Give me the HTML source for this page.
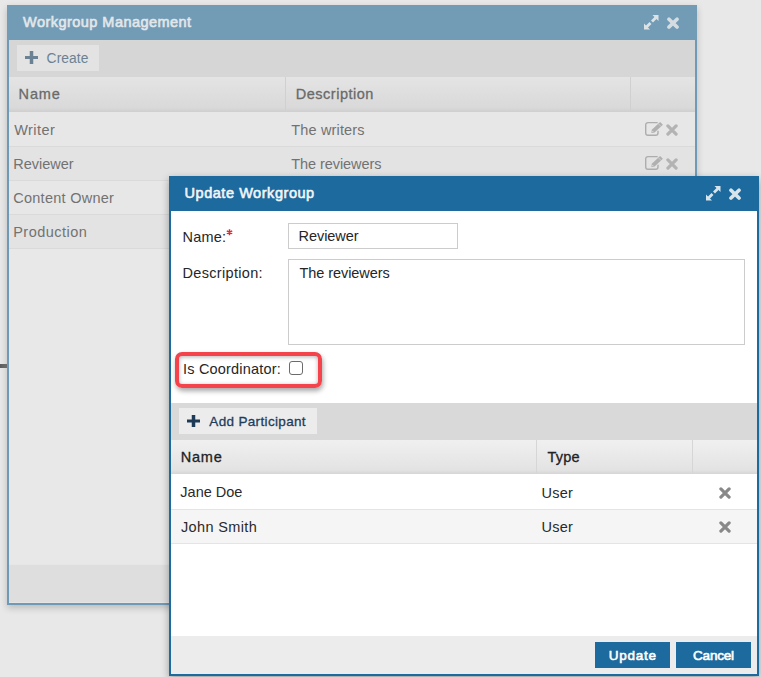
<!DOCTYPE html>
<html><head><meta charset="utf-8">
<style>
*{box-sizing:border-box;margin:0;padding:0}
html,body{width:761px;height:677px;overflow:hidden;background:#e8e8e8;font-family:"Liberation Sans",sans-serif}
.a{position:absolute}
.t{position:absolute;white-space:nowrap;line-height:1}
/* background panel */
#bp{left:7px;top:5px;width:690px;height:600px;border:2px solid #6f9ab5;border-top:0;background:#e8e8e8;box-shadow:0 3px 7px rgba(0,0,0,0.2)}
#bph{left:7px;top:5px;width:690px;height:35px;background:#729cb6}
</style></head><body>
<div class="a" style="left:0;top:364px;width:7px;height:4px;background:linear-gradient(90deg,#5c5c5c,#787878)"></div>
<div id="bp" class="a"></div>
<div id="bph" class="a"></div>
<!-- toolbar -->
<div class="a" style="left:9px;top:40px;width:686px;height:37px;background:#d6d6d6"></div>
<div class="a" style="left:17px;top:45px;width:82px;height:26px;background:#e3e3e3"></div>
<!-- header -->
<div class="a" style="left:9px;top:77px;width:686px;height:35px;background:linear-gradient(#e4e4e4,#d9d9d9 88%,#cfcfcf)"></div>
<div class="a" style="left:285px;top:77px;width:1px;height:34px;background:#d0d0d0"></div>
<div class="a" style="left:630px;top:77px;width:1px;height:34px;background:#d0d0d0"></div>
<!-- rows -->
<div class="a" style="left:9px;top:112px;width:686px;height:34px;background:#e7e7e7"></div>
<div class="a" style="left:9px;top:146px;width:686px;height:1px;background:#dadada"></div>
<div class="a" style="left:9px;top:147px;width:686px;height:33px;background:#e3e3e3"></div>
<div class="a" style="left:9px;top:180px;width:686px;height:1px;background:#dadada"></div>
<div class="a" style="left:9px;top:181px;width:686px;height:33px;background:#e7e7e7"></div>
<div class="a" style="left:9px;top:214px;width:686px;height:1px;background:#dadada"></div>
<div class="a" style="left:9px;top:215px;width:686px;height:33px;background:#e3e3e3"></div>
<div class="a" style="left:9px;top:248px;width:686px;height:1px;background:#dadada"></div>
<!-- footer -->
<div class="a" style="left:9px;top:564px;width:686px;height:1px;background:#e6e6e6"></div><div class="a" style="left:9px;top:565px;width:686px;height:37px;background:#dedede"></div><div class="a" style="left:9px;top:602px;width:686px;height:1px;background:#e4e4e4"></div>


<!-- dialog -->
<div class="a" style="left:169px;top:176px;width:590px;height:500px;background:#fff;border:2px solid #1c6a9e;box-shadow:0 3px 8px rgba(0,0,0,0.33)"></div>
<div class="a" style="left:169px;top:176px;width:590px;height:35px;background:#1c6a9e"></div>

<svg class="a" style="left:226px;top:229px" width="7" height="7" viewBox="0 0 7 7"><path d="M3.5 0.3V6.2 M0.8 1.9L6.2 4.6 M0.8 4.6L6.2 1.9" stroke="#e8262e" stroke-width="1.5"/></svg>
<div class="a" style="left:288px;top:223px;width:170px;height:26px;border:1px solid #cccccc"></div>
<div class="a" style="left:288px;top:259px;width:457px;height:86px;border:1px solid #cccccc"></div>

<div class="a" style="left:175px;top:352px;width:147px;height:36px;border:4px solid #f4434b;border-radius:7px;box-shadow:1px 3px 5px rgba(0,0,0,0.35), inset 0 1px 4px rgba(0,0,0,0.3)"></div>
<div class="a" style="left:289px;top:361px;width:14px;height:14px;border:1px solid #6b6b6b;border-radius:3px;background:#fff"></div>

<div class="a" style="left:171px;top:403px;width:586px;height:37px;background:#d9d9d9"></div>
<div class="a" style="left:179px;top:408px;width:138px;height:26px;background:#ececec"></div>

<div class="a" style="left:171px;top:440px;width:586px;height:34px;background:linear-gradient(#f0f0f0,#e3e3e3 88%,#d5d5d5)"></div>
<div class="a" style="left:536px;top:440px;width:1px;height:33px;background:#d6d6d6"></div>
<div class="a" style="left:692px;top:440px;width:1px;height:33px;background:#d6d6d6"></div>

<div class="a" style="left:171px;top:509px;width:586px;height:35px;background:#f5f5f5;border-top:1px solid #e4e4e4;border-bottom:1px solid #e4e4e4"></div>

<div class="a" style="left:171px;top:636px;width:586px;height:38px;background:#ececec"></div>
<div class="a" style="left:595px;top:642px;width:75px;height:26px;background:#1c6a9e"></div>
<div class="a" style="left:676px;top:642px;width:75px;height:26px;background:#1c6a9e"></div>

<!-- icons -->
<svg class="a" style="left:25px;top:51px" width="13" height="13" viewBox="0 0 13 13"><path d="M0 5H13V8H0Z M4.75 0H8.25V13H4.75Z" fill="#6a8293"/></svg>
<svg class="a" style="left:187px;top:415px" width="13" height="12" viewBox="0 0 13 12"><path d="M0 4.5H13V7.5H0Z M4.75 0H8.25V12H4.75Z" fill="#1d3b57"/></svg>
<svg class="a" style="left:644px;top:15px" width="15" height="15" viewBox="0 0 15 15" fill="#dce3e7"><path d="M8.5 0H14.5V6Z M0 8.5V14.5H6Z"/><path d="M12 2.5L8 6.5 M2.5 12L6.5 8" stroke="#dce3e7" stroke-width="2.8"/></svg>
<svg class="a" style="left:667px;top:17px" width="12" height="12" viewBox="0 0 12 12"><path d="M2 2.2L10 10 M10 2.2L2 10" stroke="#d5dde2" stroke-width="3.7" stroke-linecap="round"/></svg>
<svg class="a" style="left:706px;top:186px" width="15" height="15" viewBox="0 0 15 15" fill="#d8e3ea"><path d="M8.5 0H14.5V6Z M0 8.5V14.5H6Z"/><path d="M12 2.5L8 6.5 M2.5 12L6.5 8" stroke="#d8e3ea" stroke-width="2.8"/></svg>
<svg class="a" style="left:729px;top:188px" width="12" height="12" viewBox="0 0 12 12"><path d="M2 2.2L10 10 M10 2.2L2 10" stroke="#d8e3ea" stroke-width="3.7" stroke-linecap="round"/></svg>
<svg class="a" style="left:666px;top:124px" width="12" height="12" viewBox="0 0 12 12"><path d="M1.9 1.9L10.1 10.1 M10.1 1.9L1.9 10.1" stroke="#b3b3b3" stroke-width="3.2" stroke-linecap="round"/></svg>
<svg class="a" style="left:666px;top:158px" width="12" height="12" viewBox="0 0 12 12"><path d="M1.9 1.9L10.1 10.1 M10.1 1.9L1.9 10.1" stroke="#b3b3b3" stroke-width="3.2" stroke-linecap="round"/></svg>
<svg class="a" style="left:645px;top:121px" width="19" height="16" viewBox="0 -1 19 16"><path d="M12.7 0.6H3A2.3 2.3 0 0 0 0.7 2.9V11A2.3 2.3 0 0 0 3 13.3H10.7A2.3 2.3 0 0 0 13 11V8.8" fill="none" stroke="#adadad" stroke-width="1.4"/><path d="M6.4 10.9L6.8 7.7L15.1 -0.1L17.9 2.7L9.6 10.5Z" fill="#b0b0b0"/><path d="M13.3 1.7L16.1 4.5" stroke="#e0e0e0" stroke-width="0.6"/><path d="M7.3 10.0L7.5 8.7L8.7 9.8Z" fill="#e7e7e7"/></svg>
<svg class="a" style="left:645px;top:155px" width="19" height="16" viewBox="0 -1 19 16"><path d="M12.7 0.6H3A2.3 2.3 0 0 0 0.7 2.9V11A2.3 2.3 0 0 0 3 13.3H10.7A2.3 2.3 0 0 0 13 11V8.8" fill="none" stroke="#adadad" stroke-width="1.4"/><path d="M6.4 10.9L6.8 7.7L15.1 -0.1L17.9 2.7L9.6 10.5Z" fill="#b0b0b0"/><path d="M13.3 1.7L16.1 4.5" stroke="#e0e0e0" stroke-width="0.6"/><path d="M7.3 10.0L7.5 8.7L8.7 9.8Z" fill="#e7e7e7"/></svg>
<svg class="a" style="left:719px;top:487px" width="12" height="12" viewBox="0 0 12 12"><path d="M1.9 1.9L10.1 10.1 M10.1 1.9L1.9 10.1" stroke="#888" stroke-width="3.2" stroke-linecap="round"/></svg>
<svg class="a" style="left:719px;top:521px" width="12" height="12" viewBox="0 0 12 12"><path d="M1.9 1.9L10.1 10.1 M10.1 1.9L1.9 10.1" stroke="#888" stroke-width="3.2" stroke-linecap="round"/></svg>
<!--TEXTS-->
<div class="t" style="left:23.1px;top:15.0px;font-size:14.5px;font-weight:400;color:#e2e7ea;letter-spacing:0.46px;-webkit-text-stroke:0.6px #e2e7ea">Workgroup Management</div>
<div class="t" style="left:46.6px;top:52.0px;font-size:13.8px;font-weight:400;color:#6a8293;letter-spacing:0.08px">Create</div>
<div class="t" style="left:18.6px;top:87.0px;font-size:14.5px;font-weight:400;color:#6a6a6a;letter-spacing:0.87px;-webkit-text-stroke:0.3px #6a6a6a">Name</div>
<div class="t" style="left:295.8px;top:86.6px;font-size:14.5px;font-weight:400;color:#6a6a6a;letter-spacing:0.50px;-webkit-text-stroke:0.3px #6a6a6a">Description</div>
<div class="t" style="left:14.2px;top:123.0px;font-size:14.5px;font-weight:400;color:#727272;letter-spacing:0.46px">Writer</div>
<div class="t" style="left:291.3px;top:123.0px;font-size:14.5px;font-weight:400;color:#727272;letter-spacing:0.15px">The writers</div>
<div class="t" style="left:13.2px;top:157.0px;font-size:14.5px;font-weight:400;color:#727272;letter-spacing:0.00px">Reviewer</div>
<div class="t" style="left:291.3px;top:157.0px;font-size:14.5px;font-weight:400;color:#727272;letter-spacing:-0.08px">The reviewers</div>
<div class="t" style="left:13.2px;top:191.0px;font-size:14.5px;font-weight:400;color:#727272;letter-spacing:0.27px">Content Owner</div>
<div class="t" style="left:13.2px;top:225.0px;font-size:14.5px;font-weight:400;color:#727272;letter-spacing:0.49px">Production</div>
<div class="t" style="left:184.5px;top:186.0px;font-size:14.5px;font-weight:400;color:#f2f5f8;letter-spacing:0.55px;-webkit-text-stroke:0.6px #f2f5f8">Update Workgroup</div>
<div class="t" style="left:182.5px;top:230.0px;font-size:14.5px;font-weight:400;color:#262626;letter-spacing:0.20px">Name:</div>
<div class="t" style="left:298.5px;top:229.0px;font-size:14.5px;font-weight:400;color:#262626;letter-spacing:-0.04px">Reviewer</div>
<div class="t" style="left:182.5px;top:266.0px;font-size:14.5px;font-weight:400;color:#262626;letter-spacing:0.32px">Description:</div>
<div class="t" style="left:299.5px;top:266.0px;font-size:14.5px;font-weight:400;color:#262626;letter-spacing:-0.07px">The reviewers</div>
<div class="t" style="left:183.0px;top:362.0px;font-size:14.5px;font-weight:400;color:#262626;letter-spacing:0.19px">Is Coordinator:</div>
<div class="t" style="left:209.3px;top:415.0px;font-size:13.5px;font-weight:400;color:#1c3d5c;letter-spacing:0.34px;-webkit-text-stroke:0.3px #1c3d5c">Add Participant</div>
<div class="t" style="left:180.7px;top:450.0px;font-size:14.5px;font-weight:400;color:#222222;letter-spacing:0.80px;-webkit-text-stroke:0.3px #222222">Name</div>
<div class="t" style="left:547.5px;top:450.0px;font-size:14.5px;font-weight:400;color:#222222;letter-spacing:0.20px;-webkit-text-stroke:0.3px #222222">Type</div>
<div class="t" style="left:180.3px;top:485.0px;font-size:14.5px;font-weight:400;color:#2a2a2a;letter-spacing:0.01px">Jane Doe</div>
<div class="t" style="left:541.6px;top:486.0px;font-size:14.5px;font-weight:400;color:#2a2a2a;letter-spacing:0.20px">User</div>
<div class="t" style="left:180.9px;top:520.0px;font-size:14.5px;font-weight:400;color:#2a2a2a;letter-spacing:0.37px">John Smith</div>
<div class="t" style="left:541.6px;top:520.0px;font-size:14.5px;font-weight:400;color:#2a2a2a;letter-spacing:0.20px">User</div>
<div class="t" style="left:608.7px;top:649.4px;font-size:13.5px;font-weight:400;color:#ffffff;letter-spacing:0.74px;-webkit-text-stroke:0.6px #ffffff">Update</div>
<div class="t" style="left:693.0px;top:649.4px;font-size:13.5px;font-weight:400;color:#ffffff;letter-spacing:-0.18px;-webkit-text-stroke:0.6px #ffffff">Cancel</div>
</body></html>
